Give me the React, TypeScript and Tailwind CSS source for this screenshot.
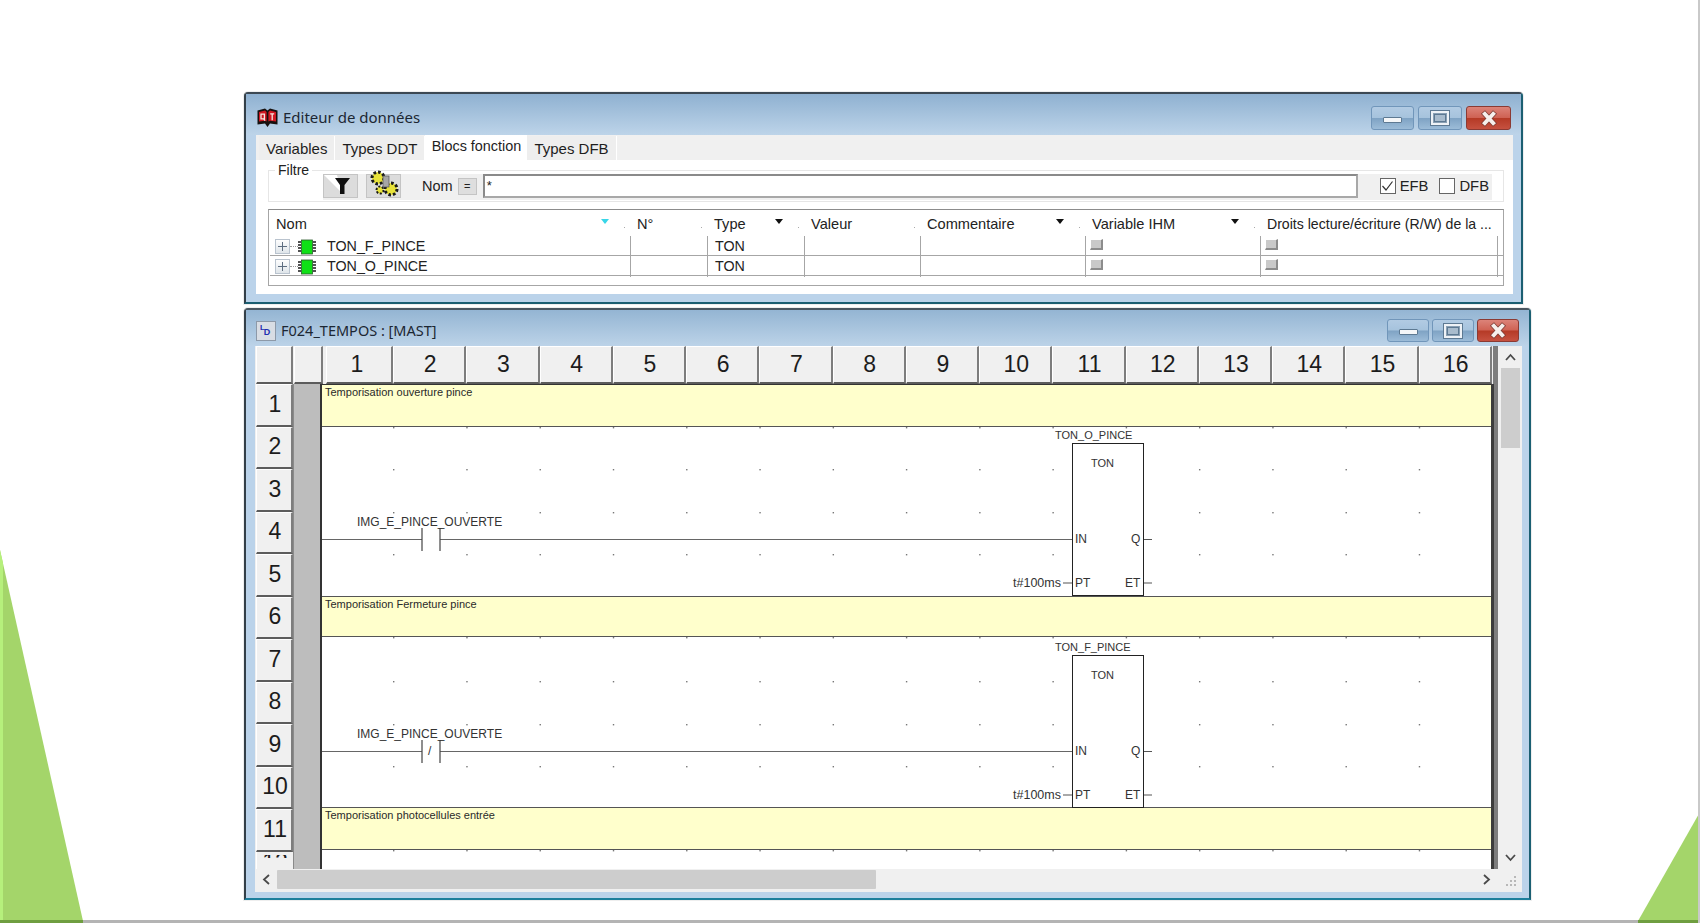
import React from "react";

const tabs = ["Variables", "Types DDT", "Blocs fonction", "Types DFB"];

const columns = [
  { title: "Nom", arrow: "#38d6e8" },
  { title: "N°" },
  { title: "Type", arrow: "#111" },
  { title: "Valeur" },
  { title: "Commentaire", arrow: "#111" },
  { title: "Variable IHM", arrow: "#111" },
  { title: "Droits lecture/écriture (R/W) de la ..." },
];

const dotsX = Array.from({ length: 15 }, (_, i) => 71 + i * 73.27);

function BookLogo() {
  return (
    <svg width="21" height="20" viewBox="0 0 21 20">
      <path d="M0.5 2.5 L8 0.5 L10.5 2.5 L13 0.5 L20.5 2.5 V16.5 L13 15.5 L10.5 19 L8 15.5 L0.5 16.5 Z" fill="#17100f" />
      <path d="M2 4 L8 2.5 L9.6 4 V13.5 L8 12.8 L2 13.6 Z" fill="#cf1822" />
      <path d="M19 4 L13 2.5 L11.4 4 V13.5 L13 12.8 L19 13.6 Z" fill="#cf1822" />
      <path d="M4 6.2 h3.4 v4.6 h-3.4 z M6.4 10.6 l1.6 2 M13.2 5.8 h4 M15.2 5.8 v6.4" fill="none" stroke="#f6e5e0" strokeWidth="1.3" />
    </svg>
  );
}

function CaptionButton({ kind, className }: { kind: "min" | "max" | "close"; className: string }) {
  if (kind === "close") {
    return (
      <div className={`flex items-center justify-center rounded-[3px] border border-[#8b3a33] bg-[linear-gradient(#dc8379_0%,#cf6254_48%,#b53a26_52%,#c65140_100%)] ${className}`}>
        <svg width="20" height="17" viewBox="0 0 20 17">
          <path d="M4 2 L16 15 M16 2 L4 15" stroke="#7c3b34" strokeWidth="5.5" />
          <path d="M4.5 2.5 L15.5 14.5 M15.5 2.5 L4.5 14.5" stroke="#f6efec" strokeWidth="4" />
        </svg>
      </div>
    );
  }
  return (
    <div className={`flex items-center justify-center rounded-[3px] border border-[#7196ba] bg-[linear-gradient(#b2cbe3_0%,#a6c3dd_48%,#7fa3c4_52%,#9cbcd8_100%)] ${className}`}>
      {kind === "min" ? (
        <div className="mt-[3px] h-[6px] w-[19px] rounded-[1px] border border-[#5d7992] bg-[#f4f6f8]" />
      ) : (
        <div className="flex h-[14px] w-[18px] items-center justify-center border-2 border-[#eef2f6] bg-[#8aa0b4] outline outline-1 outline-[#5d7992]">
          <div className="h-[8px] w-[12px] border border-[#5d7992] bg-[#a9bccd]" />
        </div>
      )}
    </div>
  );
}

function ChipIcon() {
  return (
    <svg width="18" height="16" viewBox="0 0 18 16">
      <rect x="3.5" y="1" width="11" height="14" fill="#0fe016" stroke="#2b5a2c" strokeWidth="0.8" />
      <path d="M0 3h3 M0 6h3 M0 9h3 M0 12h3 M15 3h3 M15 6h3 M15 9h3 M15 12h3" stroke="#1b1b1b" strokeWidth="1.4" />
    </svg>
  );
}

function ExpandBox() {
  return (
    <div className="flex h-[15px] w-[15px] items-center justify-center border border-[#b9c3ce] bg-[linear-gradient(#fdfdfd,#dfe5ea)]">
      <svg width="11" height="11" viewBox="0 0 11 11">
        <path d="M5.5 1v9 M1 5.5h9" stroke="#5d6d80" strokeWidth="1" />
      </svg>
    </div>
  );
}

function MiniCheck() {
  return <div className="-mt-[4px] ml-[4px] h-[11px] w-[13px] border-t border-l border-t-white border-l-white border-b-2 border-r-2 border-b-[#8c8c8c] border-r-[#8c8c8c] bg-[#c9c9c9]" />;
}

function DataEditor() {
  return (
    <div className="flex h-[212px] w-[1279px] flex-col rounded-t-[4px] border-2 border-t-[#3c4853] border-l-[#333f48] border-r-[#1b5f72] border-b-[#1b5f72] bg-[#bbd3ea] shadow-[0_0_0_1px_#eeeeee]">
      <div className="flex h-[41px] shrink-0 items-center bg-[linear-gradient(#8fb1d1,#bdd4e9)] pl-[11px] pr-[10px] pt-[7px]">
        <BookLogo />
        <span className="-mt-[1px] ml-[5px] font-['Noto_Sans',sans-serif] text-[15px] text-[#1c2733]">Editeur de données</span>
        <div className="ml-auto flex gap-[4px]">
          <CaptionButton kind="min" className="h-[24px] w-[43px]" />
          <CaptionButton kind="max" className="h-[24px] w-[44px]" />
          <CaptionButton kind="close" className="h-[24px] w-[45px]" />
        </div>
      </div>
      <div className="ml-[10px] mr-[8px] flex h-[159px] flex-col bg-white">
        <div className="flex h-[25px] shrink-0 items-end bg-[#f0f0f0] pl-[3px] text-[15px] text-[#1e1e1e]">
          {tabs.map((tab) =>
            tab === "Blocs fonction" ? (
              <div key={tab} className="-mb-px flex h-[26px] w-[102px] items-start justify-center bg-white pt-[1px] text-[14.4px]">
                {tab}
              </div>
            ) : (
              <div key={tab} className="flex h-[24px] items-center border-r border-r-white bg-[#eeeeee] px-[7px] pt-[2px]">
                {tab}
              </div>
            )
          )}
        </div>

        <div className="relative ml-[12px] mr-[9px] mt-[10px] flex h-[32px] border border-[#e6e6e6]">
          <span className="absolute left-[6px] top-[-9px] bg-white px-[3px] text-[14px] leading-[16px] text-[#222]">Filtre</span>
          <div className="ml-[54px] mt-[3px] flex h-[26px] w-[1169px] items-start bg-[#f0f0f0] text-[14.5px] text-[#222]">
            <div className="flex h-[24px] w-[35px] items-center justify-center border border-[#c4c4c4] bg-[#dcdcdc]">
              <svg width="33" height="22" viewBox="0 0 33 22">
                <path d="M0 0 H13 L18 18 Z" fill="#ffffff" />
                <path d="M11 3 H26 L20.5 10 V19 H16 V10 Z" fill="#0f0f0f" />
              </svg>
            </div>
            <div className="ml-[8px] flex h-[24px] w-[35px] items-center justify-center border border-[#c4c4c4] bg-[#dcdcdc]">
              <svg width="36" height="30" viewBox="0 0 36 30" className="-mt-[4px] shrink-0">
                <circle cx="12" cy="9" r="6" fill="#e7e23a" stroke="#1a1a1a" strokeWidth="3" strokeDasharray="2.6 2" />
                <circle cx="25" cy="20" r="6" fill="#e7e23a" stroke="#1a1a1a" strokeWidth="3" strokeDasharray="2.6 2" />
                <circle cx="14" cy="21" r="3.5" fill="#e7e23a" stroke="#1a1a1a" strokeWidth="2" strokeDasharray="2 1.6" />
                <rect x="17" y="7" width="6" height="11" fill="#a6a6a6" stroke="#555" strokeWidth="0.7" />
              </svg>
            </div>
            <span className="ml-[21px] mt-[2px] leading-[20px]">Nom</span>
            <div className="ml-[5px] mt-[4px] flex h-[17px] w-[19px] items-center justify-center border border-[#c4c4c4] bg-[#dedede] text-[11px] leading-none">=</div>
            <div className="ml-[6px] h-[24px] w-[875px] border-2 border-t-[#8a8a8a] border-l-[#8a8a8a] border-r-[#a8a8a8] border-b-[#a8a8a8] bg-white pl-[2px] text-[13px] leading-[20px]">*</div>
            <div className="ml-[22px] mt-[4px] flex h-[16px] w-[16px] items-center justify-center border border-[#666] bg-white">
              <svg width="13" height="12" viewBox="0 0 13 12">
                <path d="M1.5 6 L5 10 L11.5 1.5" fill="none" stroke="#333" strokeWidth="1.2" />
              </svg>
            </div>
            <span className="ml-[4px] mt-[2px] text-[14.8px] leading-[20px]">EFB</span>
            <div className="ml-[11px] mt-[4px] h-[16px] w-[16px] border border-[#666] bg-white" />
            <span className="ml-[4px] mt-[2px] text-[14.8px] leading-[20px]">DFB</span>
          </div>
        </div>

        <div className="ml-[12px] mr-[9px] mt-[7px] h-[77px] border border-t-[#8c8c8c] border-l-[#a6a6a6] border-r-[#a6a6a6] border-b-[#a6a6a6] pl-[1px] text-[14.6px] text-[#222]">
          <div className="grid h-[26px] grid-cols-[361px_77px_97px_116px_165px_175px_237px]">
            {columns.map((col, i) => (
              <div key={col.title} className={`relative pl-[6px] pt-[3.5px] leading-[20px] ${i === 6 ? "text-[14.1px]" : ""}`}>
                <span className="whitespace-nowrap">{col.title}</span>
                {col.arrow && (
                  <svg width="8" height="5" viewBox="0 0 8 5" className="absolute right-[22px] top-[9px]">
                    <path d="M0 0 H8 L4 5 Z" fill={col.arrow} />
                  </svg>
                )}
                {i < 6 && <div className="absolute bottom-[8px] right-[6px] h-px w-px bg-[#aaaaaa]" />}
              </div>
            ))}
          </div>
          {["TON_F_PINCE", "TON_O_PINCE"].map((name) => (
            <div key={name} className="grid h-[20px] grid-cols-[361px_77px_97px_116px_165px_175px_237px] items-stretch border-b border-b-[#a6a6a6] text-[14.3px]">
              <div className="flex items-center border-r border-r-[#a6a6a6] pl-[5px]">
                <ExpandBox />
                <div className="w-[8px] border-t border-dotted border-t-[#999]" />
                <ChipIcon />
                <span className="ml-[11px]">{name}</span>
              </div>
              <div className="border-r border-r-[#a6a6a6]" />
              <div className="flex items-center border-r border-r-[#a6a6a6] pl-[7px]">TON</div>
              <div className="border-r border-r-[#a6a6a6]" />
              <div className="border-r border-r-[#a6a6a6]" />
              <div className="flex items-center border-r border-r-[#a6a6a6]">
                <MiniCheck />
              </div>
              <div className="flex items-center border-r border-r-[#a6a6a6]">
                <MiniCheck />
              </div>
            </div>
          ))}
        </div>
      </div>
    </div>
  );
}

function Band({ text, className }: { text: string; className: string }) {
  return <div className={`shrink-0 bg-[#ffffcc] pl-[3px] text-[11px] leading-[15px] text-[#2a2a2a] ${className}`}>{text}</div>;
}

function Rung({ negated, instance, second }: { negated?: boolean; instance: string; second?: boolean }) {
  const rows = second ? [-2, 42, 85, 127] : [0, 42, 85, 127];
  return (
    <div className={`relative shrink-0 bg-white ${second ? "h-[170px]" : "h-[169px]"}`}>
      <div className={`absolute left-0 right-0 h-[170px] ${second ? "top-[2px]" : "top-0"}`}>
        <svg width="1169" height="170" viewBox="0 0 1169 170" className="absolute left-0 top-0 overflow-visible">
          {rows.map((y) =>
            dotsX.map((x) => <rect key={`${x}-${y}`} x={x} y={y} width="1.4" height="1.4" fill="#777" />)
          )}
          <path d="M0 112.5 H100 M118 112.5 H750" stroke="#666" strokeWidth="1.2" />
          <path d="M100 101 V124 M118 101 V124" stroke="#444" strokeWidth="1.2" />
          <path d="M741 156 H750 M821 112.5 H830 M821 156 H830" stroke="#555" strokeWidth="1.2" />
        </svg>
        <span className="absolute left-[35px] top-[88px] text-[12px] leading-[14px] text-[#333]">IMG_E_PINCE_OUVERTE</span>
        {negated && <span className="absolute left-[106px] top-[105px] text-[12px] leading-[14px] text-[#333]">/</span>}
        <span className="absolute left-[733px] top-[1px] text-[11px] leading-[14px] text-[#333]">{instance}</span>
        <div className="absolute left-[750px] top-[16px] h-[153px] w-[72px] border border-[#222] bg-white" />
        <span className="absolute left-[769px] top-[29px] text-[11px] leading-[14px] text-[#333]">TON</span>
        <span className="absolute left-[753px] top-[105px] text-[12px] leading-[14px] text-[#333]">IN</span>
        <span className="absolute left-[809px] top-[105px] text-[12px] leading-[14px] text-[#333]">Q</span>
        <span className="absolute left-[753px] top-[148.5px] text-[12px] leading-[14px] text-[#333]">PT</span>
        <span className="absolute left-[803px] top-[148.5px] text-[12px] leading-[14px] text-[#333]">ET</span>
        <span className="absolute left-[691px] top-[148.5px] text-[12.5px] leading-[14px] text-[#333]">t#100ms</span>
      </div>
    </div>
  );
}

function HeaderCell({ label, className }: { label?: string; className: string }) {
  return (
    <div className={`flex shrink-0 items-center justify-center border-t border-l border-t-white border-l-white border-r-2 border-b-2 border-r-[#7d7d7d] border-b-[#5c5c5c] bg-[#f0f0f0] text-[23px] text-[#1c1c1c] ${className}`}>
      {label}
    </div>
  );
}

function Chevron({ d, className }: { d: string; className?: string }) {
  return (
    <svg width="11" height="11" viewBox="0 0 11 11" className={className}>
      <path d={d} fill="none" stroke="#4a4a4a" strokeWidth="1.8" />
    </svg>
  );
}

function LadderEditor() {
  return (
    <div className="flex h-[592px] w-[1287px] flex-col rounded-t-[4px] border-2 border-t-[#4a5660] border-l-[#333f48] border-r-[#1b5f72] border-b-[#1d7f9c] bg-[#bbd3ea] shadow-[0_0_0_1px_#eeeeee]">
      <div className="flex h-[36px] shrink-0 items-center bg-[linear-gradient(#94b5d3,#bcd3e8)] pl-[10px] pr-[10px] pt-[5px]">
        <div className="relative flex h-[20px] w-[20px] items-center justify-center border border-[#8d99a8] bg-[#d8dde4] text-[9px] font-bold leading-none text-[#1f2fb0]">
          <span className="-ml-[2px] mt-[3px] pl-[4px]">D</span>
          <span className="absolute left-[3px] top-[2px] text-[8px]">L</span>
        </div>
        <span className="ml-[5px] font-['Noto_Sans',sans-serif] text-[14.5px] text-[#1c2733]">F024_TEMPOS : [MAST]</span>
        <div className="ml-auto flex gap-[3px]">
          <CaptionButton kind="min" className="h-[23px] w-[42px]" />
          <CaptionButton kind="max" className="h-[23px] w-[42px]" />
          <CaptionButton kind="close" className="h-[23px] w-[42px]" />
        </div>
      </div>

      <div className="ml-[9px] mr-[7px] flex h-[546px] flex-col bg-[#f0f0f0]">
        <div className="flex h-[523px]">
          <div className="flex w-[1243px] flex-col pl-[1px]">
            <div className="flex h-[38px] shrink-0">
              <HeaderCell className="mr-px w-[37px]" />
              <HeaderCell className="mr-[3px] w-[29px]" />
              <HeaderCell label="1" className="w-[67px] pr-[4px]" />
              {Array.from({ length: 15 }, (_, i) => (
                <HeaderCell key={i} label={String(i + 2)} className="w-[73.27px] pl-[2px]" />
              ))}
              <div className="ml-px w-[5px] bg-[#7d7d7d]" />
            </div>
            <div className="flex h-[485px]">
              <div className="flex w-[38px] shrink-0 flex-col overflow-hidden border-r border-r-[#8a8a8a]">
                {Array.from({ length: 11 }, (_, i) => (
                  <HeaderCell key={i} label={String(i + 1)} className="h-[42.5px] w-[37px] pb-[2px] pl-[2px]" />
                ))}
                <div className="h-[18px] w-[37px] border-l border-l-white bg-[#f0f0f0] pt-[3px]">
                  <div className="h-[3px] overflow-hidden">
                    <div className="-mt-[4px] text-center text-[23px] leading-[23px] text-[#1c1c1c]">12</div>
                  </div>
                </div>
              </div>
              <div className="w-[26px] shrink-0 bg-[#bdbdbd]" />
              <div className="w-[2px] shrink-0 bg-[#333]" />
              <div className="flex w-[1169px] shrink-0 flex-col overflow-hidden border-t border-t-[#333] bg-white">
                <Band text="Temporisation ouverture pince" className="h-[42px] border-b border-b-[#555]" />
                <Rung instance="TON_O_PINCE" />
                <Band text="Temporisation Fermeture pince" className="h-[41px] border-y border-y-[#555]" />
                <Rung instance="TON_F_PINCE" negated second />
                <Band text="Temporisation photocellules entrée" className="h-[43px] border-y border-y-[#555]" />
                <svg width="1169" height="4" viewBox="0 0 1169 4" className="shrink-0">
                  {dotsX.map((x) => (
                    <rect key={x} x={x} y="0" width="1.4" height="1.4" fill="#777" />
                  ))}
                </svg>
              </div>
              <div className="w-[3px] shrink-0 bg-[#3c3c3c]" />
              <div className="w-[4px] shrink-0 bg-[#7d7d7d]" />
            </div>
          </div>
          <div className="flex w-[24px] shrink-0 flex-col items-center">
            <Chevron d="M1 8 L5.5 3 L10 8" className="mt-[6px]" />
            <div className="mt-[5px] h-[80px] w-[19px] bg-[#cdcdcd]" />
            <Chevron d="M1 3 L5.5 8 L10 3" className="mb-[6px] mt-auto" />
          </div>
        </div>
        <div className="flex h-[23px] shrink-0 items-start pt-[1px]">
          <Chevron d="M8 1 L3 5.5 L8 10" className="ml-[6px] mt-[4px]" />
          <div className="ml-[5px] h-[19px] w-[599px] rounded-[1px] bg-[#cdcdcd]" />
          <Chevron d="M3 1 L8 5.5 L3 10" className="ml-[605px] mt-[4px]" />
          <svg width="14" height="14" viewBox="0 0 14 14" className="ml-[12px] mt-[4px]">
            <path d="M10 2h2v2h-2z M6 6h2v2H6z M10 6h2v2h-2z M2 10h2v2H2z M6 10h2v2H6z M10 10h2v2h-2z" fill="#b8b8b8" />
          </svg>
        </div>
      </div>
    </div>
  );
}

export default function App() {
  return (
    <div className="relative h-[923px] w-[1700px] overflow-hidden bg-white font-['Liberation_Sans',sans-serif]">
      <svg width="83" height="371" viewBox="0 0 83 371" className="absolute bottom-[2px] left-0">
        <path d="M0 0 L83 371 H0 Z" fill="#a4d56a" />
        <path d="M0 0 L3 13 V371 H0 Z" fill="#b6f07c" />
      </svg>
      <svg width="62" height="109" viewBox="0 0 62 109" className="absolute bottom-[2px] right-0">
        <path d="M62 0 V109 H0 Z" fill="#a4d56a" />
      </svg>
      <div className="absolute bottom-0 left-0 right-0 h-[3px] bg-[#b4b4b4]" />
      <div className="absolute bottom-0 left-0 h-[3px] w-[83px] bg-[#6f9e40]" />
      <div className="absolute bottom-0 right-0 h-[3px] w-[62px] bg-[#6f9e40]" />
      <div className="absolute bottom-0 right-0 top-0 w-[2px] bg-[#c9c9c9]" />

      <div className="relative flex flex-col items-start gap-[4px] pl-[244px] pt-[92px]">
        <DataEditor />
        <LadderEditor />
      </div>
    </div>
  );
}
